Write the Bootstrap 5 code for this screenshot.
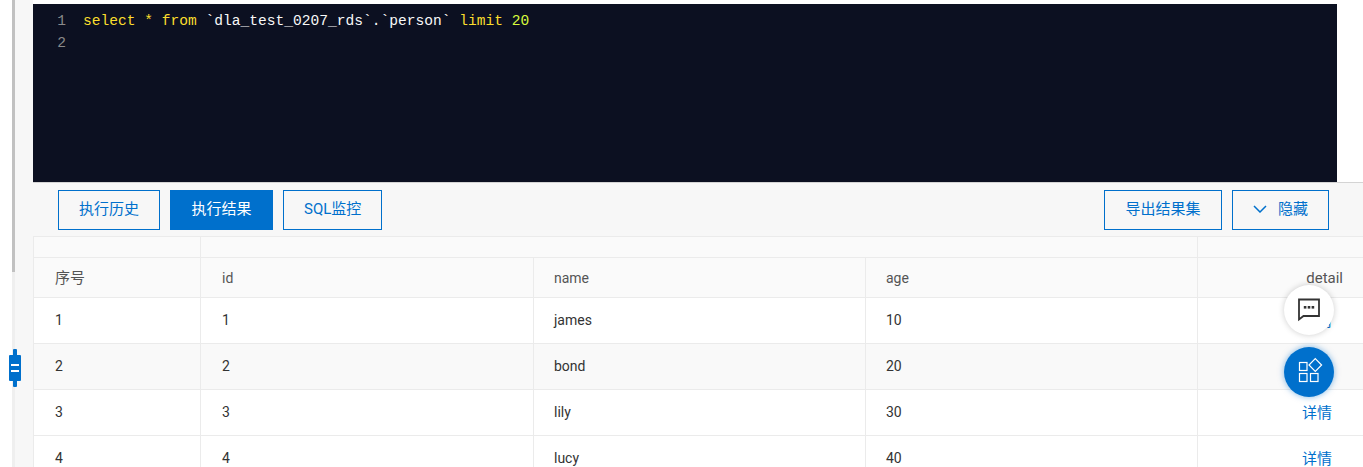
<!DOCTYPE html>
<html lang="zh">
<head>
<meta charset="utf-8">
<title>SQL</title>
<link href="https://cdn.jsdelivr.net/npm/bootstrap@5.3.0/dist/css/bootstrap.min.css" rel="stylesheet">
<style>
html,body{height:467px;overflow:hidden;background:#fff}
body{font-family:"Roboto","Noto Sans CJK SC",sans-serif;font-size:14px;color:#333}
.shell{height:467px}
.gutter-strip{width:33px;flex:none;background:#f7f7f7;padding-left:12px;position:relative}
.gutter-white{position:absolute;left:0;top:0;bottom:0;width:12px;background:#fff}
.scroll-track{position:absolute;left:12px;top:0;bottom:0;width:3px;background:#efefef}
.scroll-thumb{height:272px;background:#c1c1c1}
.drag-handle{position:absolute;left:8px;top:349px;width:14px;height:38px}
.main-pane{flex:1;min-width:0;padding-top:4px;background:#f7f7f7}
.editor-wrap{background:#fff;margin-top:-4px;padding-top:4px}
.sql-editor{margin-right:26px;height:178px;background:#0c1021;font-family:"Liberation Mono","Noto Sans CJK SC",monospace;font-size:14.58px;line-height:22px;padding-top:6px}
.sql-line{display:flex;height:22px}
.line-no{width:33px;flex:none;text-align:right;color:#8a8a8a}
.line-code{padding-left:17px;white-space:pre;color:#f8f8f8}
.kw{color:#fbde2d}
.num{color:#d8fa3c}
.toolbar{height:54px;background:#f7f7f7;border-top:1px solid #d4d4d4;padding:7px 34px 0 25px}
.act-btn{height:40px;border:1px solid #0070cc;border-radius:0;background:transparent;color:#0070cc;font-size:15px;padding:0 20px 2px;display:inline-flex;align-items:center;gap:11px}
.act-btn:hover{color:#0070cc;border-color:#0070cc}
.act-btn-on,.act-btn-on:hover{background:#0070cc;color:#fff}
.act-wide{padding-left:20.5px;padding-right:20.5px}
.btn-row{gap:10px}
.data-table{table-layout:fixed;width:1330px;margin:0;border-collapse:collapse;color:#333}
.data-table td,.data-table th{border:1px solid #ebebeb;border-top:0;padding:0 21px;font-weight:400;vertical-align:middle;background:#fff;box-shadow:none}
.data-table thead th{background:#fafafa;color:#555}
.data-table tr.group-row th{height:21px;padding:0;border-top:1px solid #ebebeb}
.data-table tr.head-row th{height:40px;padding-top:1px}
.data-table tbody td{height:46px}
.data-table tbody tr.alt td{background:#f9f9f9}
.data-table .col-tight{padding-left:20px}
.data-table .col-end{text-align:right;padding-right:20px}
.head-big{font-size:15px}
.detail-link{color:#0070cc;text-decoration:none;margin-right:11px;font-size:15px;position:relative;top:1px}
.fab{position:absolute;left:1284px;width:50px;height:50px;border-radius:50%;display:flex;align-items:center;justify-content:center}
.fab svg{overflow:visible}
.fab-chat{top:285px;background:#fff;box-shadow:0 0 6px rgba(0,0,0,.2)}
.fab-apps{top:347px;background:#0070cc;box-shadow:0 0 6px rgba(0,112,204,.5)}
</style>
</head>
<body>
<div class="shell d-flex position-relative">
  <div class="gutter-strip">
    <div class="gutter-white"></div>
    <div class="scroll-track"><div class="scroll-thumb"></div></div>
    <svg class="drag-handle" viewBox="0 0 14 38" aria-hidden="true">
      <rect x="5" y="0" width="4" height="38" rx="1" fill="#0070cc"/>
      <rect x="1" y="6" width="12" height="26" rx="1" fill="#0070cc"/>
      <rect x="3" y="15" width="8" height="2" fill="#fff"/>
      <rect x="3" y="21" width="8" height="2" fill="#fff"/>
    </svg>
  </div>
  <div class="main-pane">
    <div class="editor-wrap">
      <div class="sql-editor">
        <div class="sql-line"><span class="line-no">1</span><span class="line-code"><span class="kw">select * from</span> `dla_test_0207_rds`.`person` <span class="kw">limit</span> <span class="num">20</span></span></div>
        <div class="sql-line"><span class="line-no">2</span><span class="line-code"></span></div>
      </div>
    </div>
    <div class="toolbar d-flex justify-content-between">
      <div class="d-flex btn-row">
        <button type="button" class="btn act-btn">执行历史</button>
        <button type="button" class="btn act-btn act-btn-on act-wide">执行结果</button>
        <button type="button" class="btn act-btn">SQL监控</button>
      </div>
      <div class="d-flex btn-row">
        <button type="button" class="btn act-btn act-wide">导出结果集</button>
        <button type="button" class="btn act-btn">
          <svg width="14" height="8" viewBox="0 0 14 8" aria-hidden="true"><path d="M1 1l6 6 6-6" fill="none" stroke="#0070cc" stroke-width="1.5"/></svg>隐藏</button>
      </div>
    </div>
    <table class="table data-table">
      <colgroup><col style="width:167px"><col style="width:333px"><col style="width:332px"><col style="width:332px"><col style="width:166px"></colgroup>
      <thead>
        <tr class="group-row"><th></th><th colspan="3"></th><th></th></tr>
        <tr class="head-row"><th class="head-big">序号</th><th>id</th><th class="col-tight">name</th><th class="col-tight">age</th><th class="col-end head-big">detail</th></tr>
      </thead>
      <tbody>
        <tr><td>1</td><td>1</td><td class="col-tight">james</td><td class="col-tight">10</td><td class="col-end"><a class="detail-link" href="#">详情</a></td></tr>
        <tr class="alt"><td>2</td><td>2</td><td class="col-tight">bond</td><td class="col-tight">20</td><td class="col-end"><a class="detail-link" href="#">详情</a></td></tr>
        <tr><td>3</td><td>3</td><td class="col-tight">lily</td><td class="col-tight">30</td><td class="col-end"><a class="detail-link" href="#">详情</a></td></tr>
        <tr><td>4</td><td>4</td><td class="col-tight">lucy</td><td class="col-tight">40</td><td class="col-end"><a class="detail-link" href="#">详情</a></td></tr>
      </tbody>
    </table>
  </div>
  <div class="fab fab-chat">
    <svg width="24" height="24" viewBox="0 0 24 24" aria-hidden="true">
      <path d="M2 1.5h20v16.5H6.5L2 21.5z" fill="none" stroke="#333" stroke-width="1.8"/>
      <rect x="6.8" y="8" width="2.6" height="2.6" fill="#333"/><rect x="10.7" y="8" width="2.6" height="2.6" fill="#333"/><rect x="14.6" y="8" width="2.6" height="2.6" fill="#333"/>
    </svg>
  </div>
  <div class="fab fab-apps">
    <svg width="24" height="24" viewBox="0 0 24 24" aria-hidden="true">
      <g fill="none" stroke="#fff" stroke-width="1.2">
        <rect x="2.5" y="2.5" width="7.5" height="8"/>
        <rect x="2.5" y="13.5" width="7.5" height="8"/>
        <rect x="13.5" y="13.5" width="7.5" height="8"/>
        <path d="M18.3-1.3l6.3 6.3-6.3 6.3-6.3-6.3z"/>
      </g>
    </svg>
  </div>
</div>
<script src="https://cdn.jsdelivr.net/npm/bootstrap@5.3.0/dist/js/bootstrap.bundle.min.js"></script>
</body>
</html>
